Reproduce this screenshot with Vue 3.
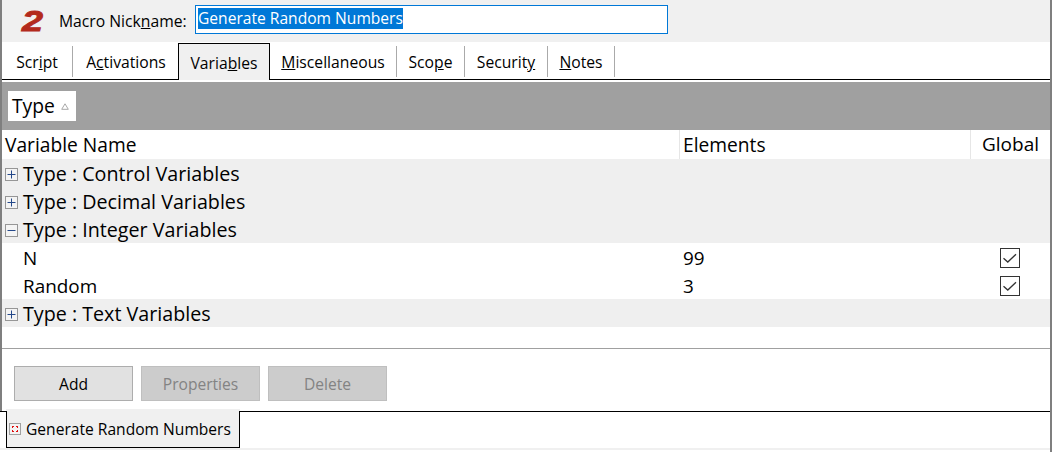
<script setup>
const tabs = [
  { pre: 'Scr', u: 'i', post: 'pt', w: 71 },
  { pre: 'A', u: 'c', post: 'tivations', w: 106 },
  { pre: 'Varia', u: 'b', post: 'les', active: true, w: 92 },
  { pre: '', u: 'M', post: 'iscellaneous', w: 127 },
  { pre: 'Sco', u: 'p', post: 'e', w: 68 },
  { pre: 'Securit', u: 'y', post: '', w: 83 },
  { pre: '', u: 'N', post: 'otes', w: 67 }
]
const rows = [
  { kind: 'group', open: false, name: 'Type : Control Variables' },
  { kind: 'group', open: false, name: 'Type : Decimal Variables' },
  { kind: 'group', open: true, name: 'Type : Integer Variables' },
  { kind: 'item', name: 'N', elements: '99' },
  { kind: 'item', name: 'Random', elements: '3' },
  { kind: 'group', open: false, name: 'Type : Text Variables' }
]
</script>

<template>
  <div class="win">
    <div class="main">
      <div class="top">
        <span class="logo">2</span>
        <label class="nick">Macro Nick<u>n</u>ame:</label>
        <div class="input"><span class="sel">Generate Random Numbers</span></div>
      </div>

      <div class="tabs">
        <div
          v-for="t in tabs"
          :key="t.pre + t.u"
          class="tab"
          :class="{ active: t.active }"
          :style="{ width: t.w + 'px' }"
        >
          {{ t.pre }}<u>{{ t.u }}</u>{{ t.post }}
        </div>
      </div>

      <div class="band">
        <div class="chip">Type
          <svg class="sort" width="8" height="7" viewBox="0 0 8 7"><path d="M4 .8 7.3 6.3H.7Z" fill="none" stroke="#a8a8a8" /></svg>
        </div>
      </div>

      <div class="table">
        <div class="row head">
          <div class="c1">Variable Name</div>
          <div class="c2">Elements</div>
          <div class="c3 center">Global</div>
        </div>
        <div v-for="r in rows" :key="r.name" class="row" :class="r.kind">
          <template v-if="r.kind === 'group'">
            <div class="groupcell">
              <svg class="exp" width="13" height="13" viewBox="0 0 13 13">
                <rect x=".5" y=".5" width="12" height="12" fill="#f4f4f4" stroke="#969696" />
                <path d="M2.5 6.5h8" stroke="#24488a" />
                <path v-if="!r.open" d="M6.5 2.5v8" stroke="#24488a" />
              </svg>
              <span>{{ r.name }}</span>
            </div>
          </template>
          <template v-else>
            <div class="c1 indent">{{ r.name }}</div>
            <div class="c2">{{ r.elements }}</div>
            <div class="c3 center">
              <svg class="check" width="20" height="20" viewBox="0 0 20 20">
                <rect x=".5" y=".5" width="19" height="19" fill="#fff" stroke="#333" />
                <path d="M3.5 10.2 7.8 14 16 6.2" fill="none" stroke="#333" stroke-width="1.3" />
              </svg>
            </div>
          </template>
        </div>
      </div>

      <div class="buttons">
        <button class="btn">Add</button>
        <button class="btn off">Properties</button>
        <button class="btn off">Delete</button>
      </div>
    </div>

    <div class="doc">
      <div class="docline short"></div>
      <div class="doctab">
        <div class="docinner">
          <svg class="docicon" width="12" height="12" viewBox="0 0 12 12">
            <rect x=".5" y=".5" width="11" height="11" fill="#f4f4f4" stroke="#a0a0a0" />
            <path d="M3 3h2v1H4v1H3ZM7 3h2v2H8V4H7ZM3 7h1v1h1v1H3ZM8 7h1v2H7V8h1Z" fill="#e01010" />
          </svg>
          <span>Generate Random Numbers</span>
        </div>
      </div>
      <div class="docline"></div>
    </div>
  </div>
</template>

<style>
html, body { margin: 0; background: #fff; }
</style>

<style scoped>
.win {
  width: 1052px;
  height: 452px;
  box-sizing: border-box;
  border-right: 2px solid #7f7f7f;
  background: #fff;
  font-family: "Open Sans", "Noto Sans", sans-serif;
  color: #000;
  overflow: hidden;
}
.main {
  height: 411px;
  box-sizing: border-box;
  border-left: 2px solid #7f7f7f;
}
.top {
  height: 42px;
  background: #f0f0f0;
  display: flex;
  align-items: center;
}
.logo {
  font-family: "Liberation Sans", sans-serif;
  font-weight: 700;
  font-style: italic;
  font-size: 29px;
  line-height: 42px;
  color: #b32a1c;
  -webkit-text-stroke: .9px #b32a1c;
  margin-left: 22px;
  width: 13px;
  transform: scaleX(1.3);
}
.nick { font-size: 15.7px; margin-left: 22px; width: 136px; white-space: nowrap; }
.input {
  width: 473px;
  height: 29px;
  box-sizing: border-box;
  border: 1px solid #0078d7;
  background: #fff;
  padding: 2px;
  margin-top: -4px;
  font-size: 15.6px;
  line-height: 21px;
  display: flex;
}
.sel { background: #0078d7; color: #fff; white-space: nowrap; height: 21px; }
.tabs {
  height: 38px;
  box-sizing: border-box;
  border-bottom: 1px solid #000;
  display: flex;
  align-items: flex-end;
  font-size: 15.7px;
}
.tab {
  height: 31px;
  box-sizing: border-box;
  margin-bottom: 2px;
  line-height: 32px;
  text-align: center;
  border-right: 1px solid #aaa;
  white-space: nowrap;
}
.tab.active {
  height: 37px;
  margin: 0 0 -1px -1px;
  line-height: 38px;
  border: 1px solid #000;
  border-bottom: none;
  background: #f0f0f0;
}
.tab:has(+ .tab.active) { border-right: none; }
.band {
  margin-top: 2px;
  height: 48px;
  background: #a0a0a0;
  padding: 9px 6px;
  box-sizing: border-box;
}
.chip {
  width: 68px;
  height: 30px;
  background: #fff;
  font-size: 19.3px;
  line-height: 30px;
  padding-left: 4px;
  box-sizing: border-box;
  display: flex;
  align-items: center;
  white-space: nowrap;
}
.sort { margin-left: 6px; }
.table {
  height: 219px;
  box-sizing: border-box;
  border-bottom: 1px solid #a0a0a0;
  font-size: 18.9px;
}
.row {
  display: grid;
  grid-template-columns: 678px 291px 79px;
  height: 28px;
  line-height: 30px;
  white-space: nowrap;
}
.row.head { height: 29px; line-height: 29px; font-size: 19.2px; }
.row.head .c3 { font-size: 19px; }
.head .c1, .head .c2 { border-right: 1px solid #e6e6e6; }
.c1, .c2 { padding-left: 3px; }
.indent { padding-left: 21px; }
.center { display: flex; justify-content: center; align-items: center; }
.check { margin-right: 2px; }
.row.group { background: #efefef; font-size: 19.7px; }
.groupcell {
  grid-column: 1 / -1;
  display: flex;
  align-items: center;
  padding-left: 3px;
}
.exp { margin-right: 5px; }
.buttons {
  display: flex;
  gap: 8px;
  padding: 17px 0 0 12px;
  box-sizing: border-box;
}
.btn {
  width: 119px;
  height: 35px;
  box-sizing: border-box;
  border: 1px solid #adadad;
  background: #e1e1e1;
  font: inherit;
  font-size: 15.6px;
  color: #000;
  padding: 0;
}
.btn.off { background: #cccccc; border-color: #bfbfbf; color: #838383; }
.doc {
  display: flex;
  height: 41px;
  margin-top: -2px;
  align-items: flex-start;
  background: linear-gradient(transparent 39px, #f0f0f0 39px);
}
.doctab {
  width: 234px;
  height: 39px;
  padding-top: 2px;
  box-sizing: border-box;
  background: #f0f0f0;
}
.docinner {
  height: 37px;
  box-sizing: border-box;
  border: 1px solid #000;
  border-top: none;
  display: flex;
  align-items: center;
  padding-left: 2px;
  font-size: 15.6px;
  white-space: nowrap;
}
.docicon { margin-right: 5px; }
.docline { flex: 1; margin-top: 2px; border-top: 1px solid #000; }
.docline.short { flex: none; width: 6px; }
</style>
